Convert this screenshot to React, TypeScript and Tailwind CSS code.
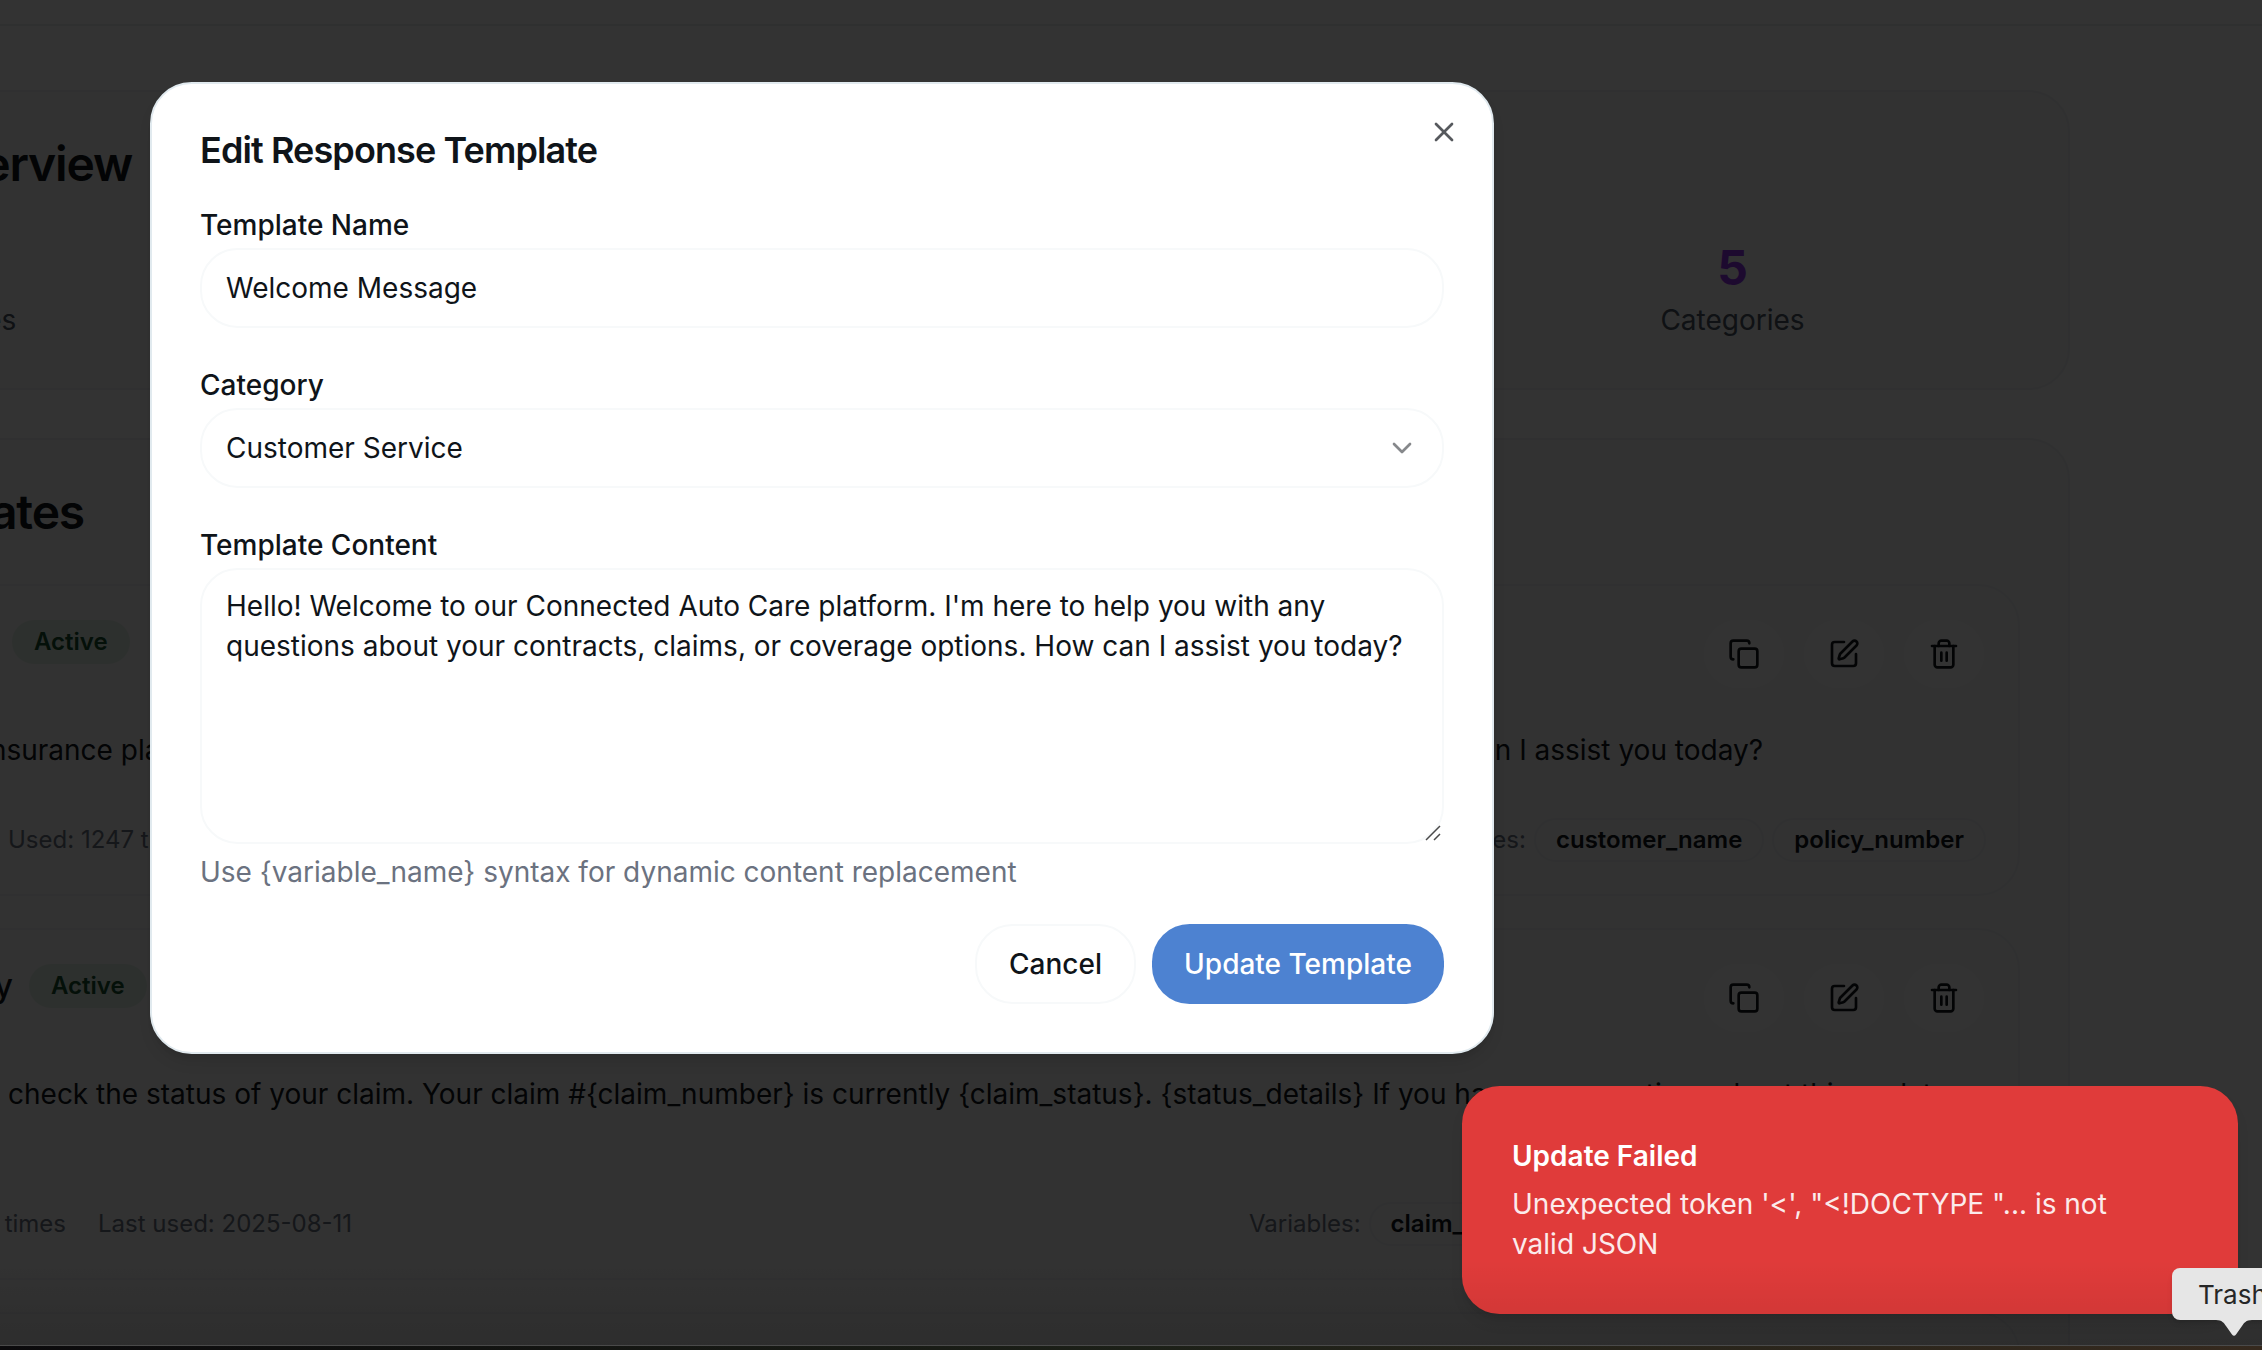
import { ChevronDown, X } from "lucide-react";
import type { ReactNode } from "react";

const iconProps = {
  className: "size-8",
  viewBox: "0 0 24 24",
  fill: "none",
  stroke: "currentColor",
  strokeWidth: 2,
  strokeLinecap: "round" as const,
  strokeLinejoin: "round" as const,
};

function CopyIcon() {
  return (
    <svg {...iconProps}>
      <rect width="14" height="14" x="8" y="8" rx="2" />
      <path d="M4 16c-1.1 0-2-.9-2-2V4c0-1.1.9-2 2-2h10c1.1 0 2 .9 2 2" />
    </svg>
  );
}

function EditIcon() {
  return (
    <svg {...iconProps}>
      <path d="M12 3H5a2 2 0 0 0-2 2v14a2 2 0 0 0 2 2h14a2 2 0 0 0 2-2v-7" />
      <path d="M18.375 2.625a1 1 0 0 1 3 3l-9.013 9.014a2 2 0 0 1-.853.505l-2.873.84a.5.5 0 0 1-.62-.62l.84-2.873a2 2 0 0 1 .506-.852z" />
    </svg>
  );
}

function TrashIcon() {
  return (
    <svg {...iconProps}>
      <path d="M3 6h18" />
      <path d="M19 6v14c0 1-1 2-2 2H7c-1 0-2-1-2-2V6" />
      <path d="M8 6V4c0-1 1-2 2-2h4c1 0 2 1 2 2v2" />
      <path d="M10 11v6M14 11v6" />
    </svg>
  );
}

function IconButton({ children }: { children: ReactNode }) {
  return (
    <button className="flex h-[72px] w-[84px] items-center justify-center rounded-[37.6px] border-2 border-[#fafbfb] bg-white">
      {children}
    </button>
  );
}

function Tag({ children }: { children: ReactNode }) {
  return (
    <span className="flex h-11 shrink-0 items-center rounded-full border-2 border-[#eef1f3] px-5 text-[24px] font-semibold leading-8 text-[#0f1419]">
      {children}
    </span>
  );
}

type ItemProps = {
  title: string;
  titleClass: string;
  body: ReactNode;
  bodyClass: string;
  usage: ReactNode;
  variables: ReactNode;
};

function TemplateItem({ title, titleClass, body, bodyClass, usage, variables }: ItemProps) {
  return (
    <div className="rounded-[41.6px] border-2 border-[#eef1f3] p-8">
      <div className="flex h-[72px] items-start justify-between">
        <div className="flex h-12 items-center">
          <div className={"flex justify-end whitespace-nowrap text-[32px] font-medium " + titleClass}>{title}</div>
          <span className="flex h-11 items-center rounded-full border-2 border-transparent bg-[#e2efe6] px-5 text-[24px] font-semibold leading-8 text-[#165030]">
            Active
          </span>
        </div>
        <div className="flex gap-4">
          <IconButton><CopyIcon /></IconButton>
          <IconButton><EditIcon /></IconButton>
          <IconButton><TrashIcon /></IconButton>
        </div>
      </div>
      <div className={"mt-4 whitespace-nowrap rounded-lg bg-[#fafafa] py-6 text-[28px] leading-10 " + bodyClass}>
        {body}
      </div>
      <div className="mt-6 flex h-11 items-center justify-between text-[24px] leading-8 text-[#6b7280]">
        {usage}
        {variables}
      </div>
    </div>
  );
}

function Background() {
  return (
    <div className="h-[1350px] w-full overflow-hidden bg-[#fcfcfc] text-[#0f1419]">
      <div className="h-[26px] border-b-2 border-[#eaeef0]" />
      <div className="-ml-[422px] mt-16 flex w-[2492px] flex-col gap-12">
        <section className="rounded-[41.6px] border-2 border-[#eef1f3] bg-[#f8f9f9] p-12">
          <div className="flex w-[504px] justify-end whitespace-nowrap text-[48px] font-semibold leading-[48px] tracking-tight">
            Template Overview
          </div>
          <div className="mt-12 grid grid-cols-4 gap-8 text-center">
            <div>
              <div className="h-16" />
              <div className="pr-[6px] text-[28px] leading-10 text-[#4b5563]">Total Templates</div>
            </div>
            <div className="col-start-4 pr-px">
              <div className="text-[48px] font-bold leading-[64px] text-[#9333ea]">5</div>
              <div className="text-[28px] leading-10 text-[#4b5563]">Categories</div>
            </div>
          </div>
        </section>
        <section className="rounded-[41.6px] border-2 border-[#eef1f3] bg-[#f8f9f9] p-12">
          <div className="flex w-[456px] justify-end whitespace-nowrap text-[48px] font-semibold leading-[48px] tracking-tight">
            Response Templates
          </div>
          <div className="mt-12 flex flex-col gap-8">
            <TemplateItem
              title="Welcome"
              titleClass="w-[334px] mr-4"
              bodyClass="h-[88px]"
              body={
                <div className="flex">
                  <div className="flex w-[515px] justify-end">Welcome to our insurance plan</div>
                  <div className="flex w-[1586px] justify-end">How can I assist you today?</div>
                </div>
              }
              usage={<span className="pl-[346px]">Used: 1247 times</span>}
              variables={
                <div className="flex items-center gap-2">
                  <span>Variables:</span>
                  <Tag>customer_name</Tag>
                  <Tag>policy_number</Tag>
                </div>
              }
            />
            <TemplateItem
              title="Claim Status Inquiry"
              titleClass="w-[351px] mr-4"
              bodyClass="h-[128px]"
              body={
                <div className="pl-[346px]">
                  check the status of your claim. Your claim #&#123;claim_number&#125; is currently &#123;claim_status&#125;. &#123;status_details&#125; If you have any questions about this update,
                </div>
              }
              usage={
                <div className="flex">
                  <span className="flex w-[404px] justify-end">Used: 892 times</span>
                  <span className="ml-8">Last used: 2025-08-11</span>
                </div>
              }
              variables={
                <div className="flex w-[737px] items-center gap-2 overflow-hidden">
                  <span>Variables:</span>
                  <Tag>claim_number</Tag>
                  <Tag>claim_status</Tag>
                </div>
              }
            />
            <TemplateItem title="" titleClass="" bodyClass="" body="" usage="" variables="" />
          </div>
        </section>
      </div>
    </div>
  );
}

function Field({ label, children }: { label: string; children: ReactNode }) {
  return (
    <div>
      <div className="flex h-12 items-center pt-[2px] text-[28px] font-medium leading-[28px]">{label}</div>
      {children}
    </div>
  );
}

function EditDialog() {
  return (
    <div className="absolute left-[150px] top-[82px] flex h-[972px] w-[1344px] flex-col gap-8 rounded-[41.6px] border-2 border-[#e1eaef] bg-white p-12 text-[#0f1419] shadow-lg">
      <h2 className="text-[36px] font-semibold leading-[36px] tracking-tight">Edit Response Template</h2>
      <X className="absolute right-8 top-8 size-8 opacity-70" strokeWidth={2} />
      <Field label="Template Name">
        <div className="flex h-20 items-center rounded-[37.6px] border-2 border-[#f7f9fa] px-6 text-[28px]">
          Welcome Message
        </div>
      </Field>
      <Field label="Category">
        <div className="flex h-20 items-center justify-between rounded-[37.6px] border-2 border-[#f7f9fa] px-6 text-[28px]">
          Customer Service
          <ChevronDown className="size-8 opacity-50" strokeWidth={2} />
        </div>
      </Field>
      <Field label="Template Content">
        <div className="relative h-[276px] whitespace-nowrap rounded-[37.6px] border-2 border-[#f7f9fa] px-6 py-4 text-[28px] leading-10">
          Hello! Welcome to our Connected Auto Care platform. I'm here to help you with any
          <br />
          questions about your contracts, claims, or coverage options. How can I assist you today?
          <svg className="absolute bottom-0 right-0 size-[18px]" viewBox="0 0 18 18" stroke="#4a4a4a" strokeWidth="1.5">
            <path d="M2 16L16 2M10 16L16 10" />
          </svg>
        </div>
        <p className="mt-2 text-[28px] leading-10 text-[#6b7280]">
          Use &#123;variable_name&#125; syntax for dynamic content replacement
        </p>
      </Field>
      <div className="flex justify-end gap-4 text-[28px] font-medium">
        <button className="flex h-20 w-[161px] items-center justify-center rounded-[37.6px] border-2 border-[#f7f9fa]">
          Cancel
        </button>
        <button className="flex h-20 w-[292px] items-center justify-center rounded-[37.6px] bg-[#4d82d1] text-white">
          Update Template
        </button>
      </div>
    </div>
  );
}

export default function App() {
  return (
    <div className="relative h-[1350px] w-full overflow-hidden bg-white font-['Inter',sans-serif]">
      <Background />
      <div className="absolute inset-0 bg-black/80" />
      <EditDialog />
      <div className="absolute left-[1462px] top-[1086px] h-[228px] w-[776px] rounded-[37.6px] bg-[#e03b3a] p-[50px] text-[28px] leading-10 text-white shadow-lg">
        <div className="font-semibold">Update Failed</div>
        <div className="mt-2 w-[620px] opacity-90">Unexpected token '&lt;', "&lt;!DOCTYPE "... is not valid JSON</div>
      </div>
      <div className="absolute inset-x-0 bottom-0 h-[90px] bg-linear-to-b from-transparent to-black/10" />
      <div className="absolute inset-x-0 bottom-0 h-[5px] border-t border-[#4a4a4a] bg-linear-to-r from-[#0b0a0c] via-[#1c2018] to-[#35291e]" />
      <div className="absolute left-[2172px] top-[1268px] flex h-[52px] w-[124px] items-center rounded-lg bg-[#e6e6e6] pl-[26px] text-[26px] text-[#262626] shadow-md">
        Trash
        <svg className="absolute left-[44px] top-[52px] h-4 w-9" viewBox="0 0 36 16" fill="#e6e6e6">
          <path d="M0 0C6 0 8 3 10 6L16 14.500Q18 17 20 14.500L26 6C28 3 30 0 36 0Z" />
        </svg>
      </div>
    </div>
  );
}
